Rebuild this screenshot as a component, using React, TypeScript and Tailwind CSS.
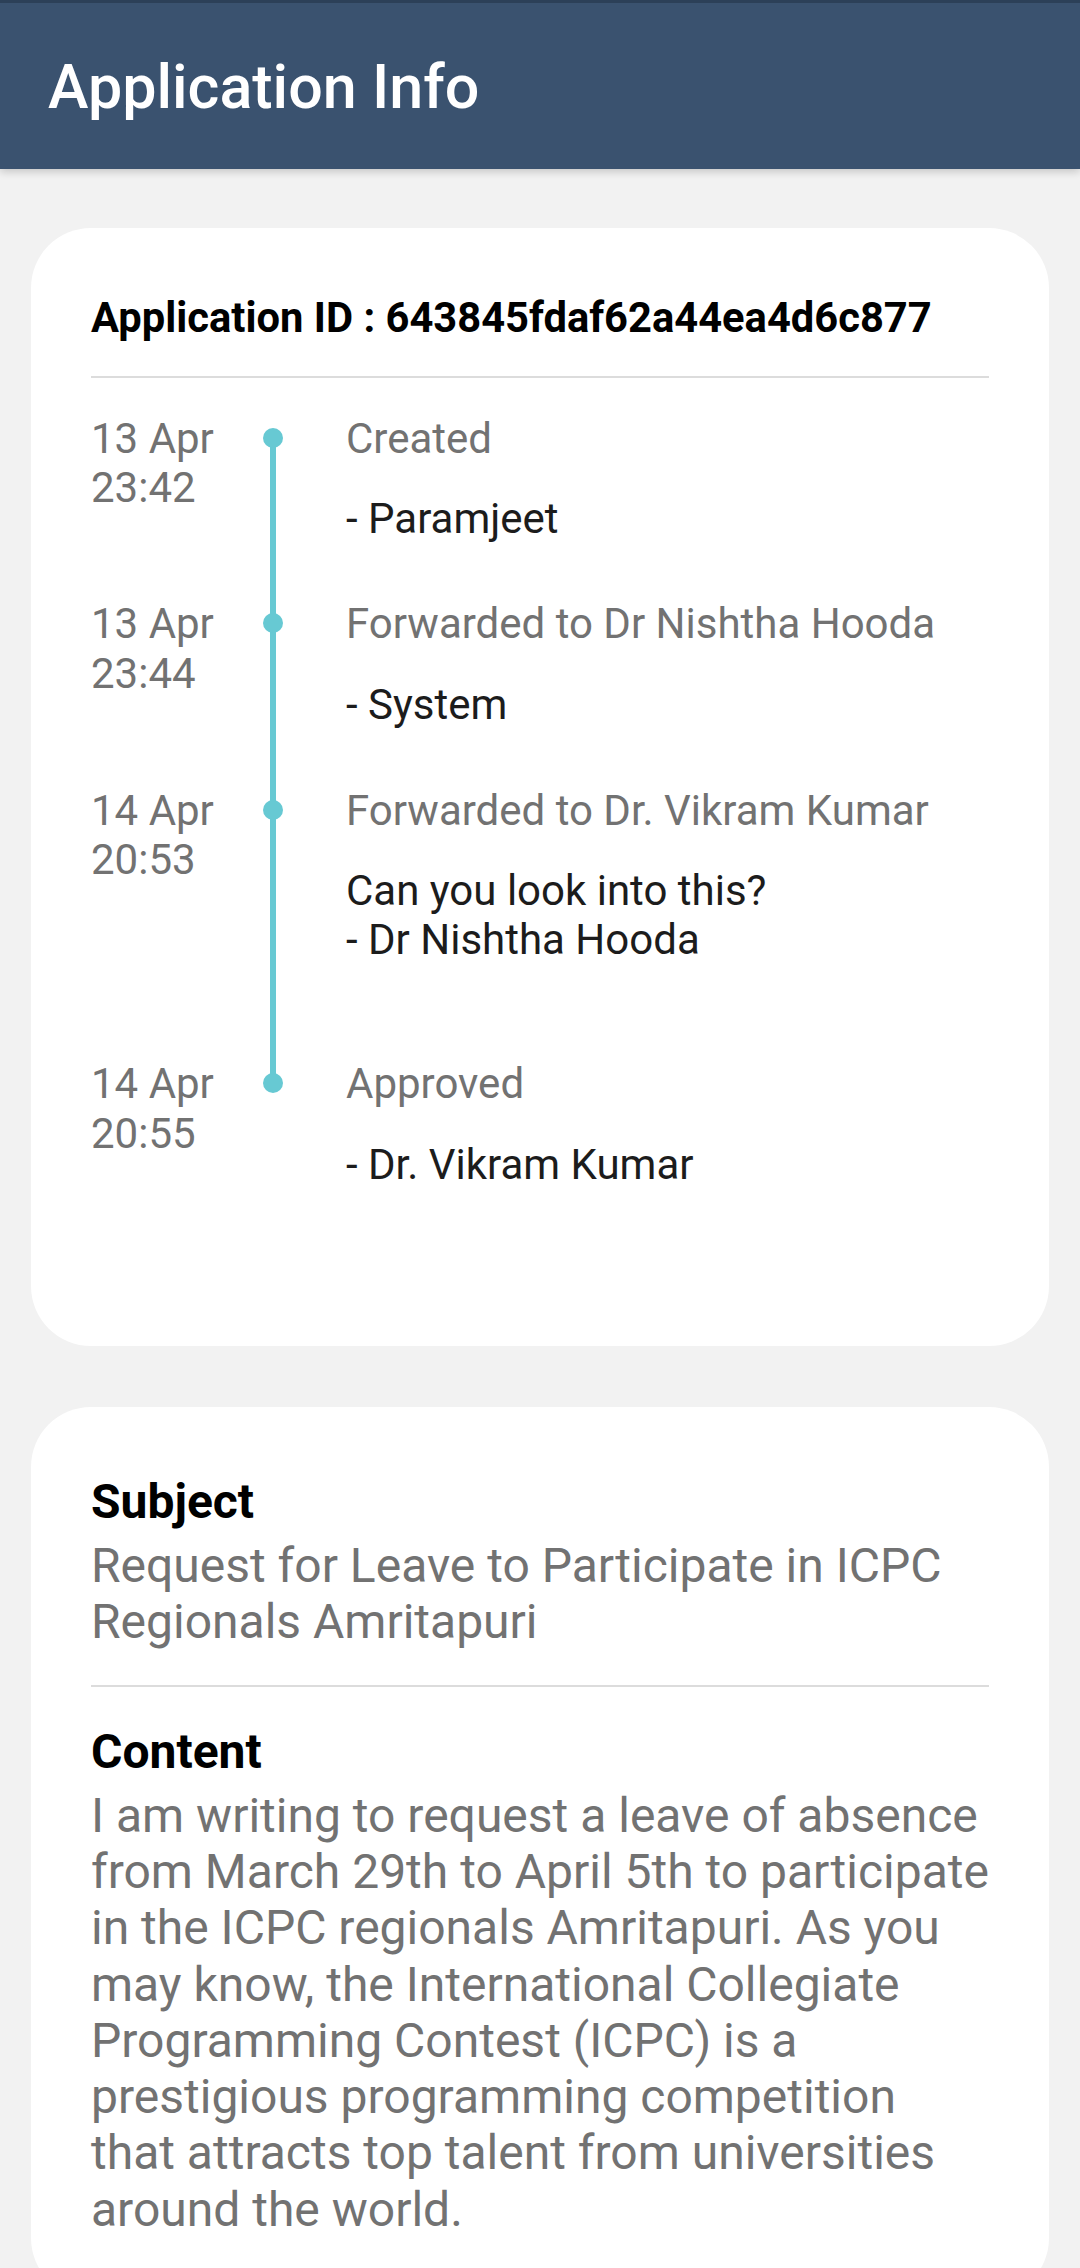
import React from "react";

type Entry = {
  date: string;
  time: string;
  title: string;
  lines: string[];
  pb: string;
  pos: "first" | "mid" | "last";
};

const entries: Entry[] = [
  { date: "13 Apr", time: "23:42", title: "Created", lines: ["- Paramjeet"], pb: "pb-[56px]", pos: "first" },
  { date: "13 Apr", time: "23:44", title: "Forwarded to Dr Nishtha Hooda", lines: ["- System"], pb: "pb-[57px]", pos: "mid" },
  {
    date: "14 Apr",
    time: "20:53",
    title: "Forwarded to Dr. Vikram Kumar",
    lines: ["Can you look into this?", "- Dr Nishtha Hooda"],
    pb: "pb-[95px]",
    pos: "mid",
  },
  { date: "14 Apr", time: "20:55", title: "Approved", lines: ["- Dr. Vikram Kumar"], pb: "pb-[97px]", pos: "last" },
];

function Row({ e }: { e: Entry }) {
  return (
    <div className="flex">
      <div className="w-[172px] shrink-0 text-[42px] leading-[1.172] text-[#727272]">
        <div>{e.date}</div>
        <div>{e.time}</div>
      </div>
      <div className="relative w-[20px] shrink-0">
        {e.pos === "first" && <div className="absolute left-[7px] top-[24px] bottom-0 w-[6px] bg-[#67c9d3]" />}
        {e.pos === "mid" && <div className="absolute left-[7px] top-0 bottom-0 w-[6px] bg-[#67c9d3]" />}
        {e.pos === "last" && <div className="absolute left-[7px] top-0 h-[24px] w-[6px] bg-[#67c9d3]" />}
        <div className="absolute left-0 top-[14px] h-[20px] w-[20px] rounded-full bg-[#67c9d3]" />
      </div>
      <div className={`ml-[63px] flex-1 ${e.pb}`}>
        <div className="text-[42px] leading-[1.172] text-[#727272] whitespace-nowrap">{e.title}</div>
        <div className="mt-[31px] text-[42px] leading-[1.172] text-[#1c1c1c]">
          {e.lines.map((l, i) => (
            <div key={i} className="whitespace-nowrap">
              {l}
            </div>
          ))}
        </div>
      </div>
    </div>
  );
}

const contentLines = [
  "I am writing to request a leave of absence",
  "from March 29th to April 5th to participate",
  "in the ICPC regionals Amritapuri. As you",
  "may know, the International Collegiate",
  "Programming Contest (ICPC) is a",
  "prestigious programming competition",
  "that attracts top talent from universities",
  "around the world.",
];

export default function App() {
  return (
    <div
      className="h-[2268px] w-[1080px] overflow-hidden bg-[#f2f2f2]"
      style={{ fontFamily: "Roboto, 'Noto Sans', sans-serif" }}
    >
      <header className="relative z-10 flex h-[169px] items-center border-t-[3px] border-[#2c4058] bg-[#3a526f] pl-[48px] pt-[3px] shadow-[0_3px_8px_rgba(0,0,0,0.18)]">
        <h1 className="text-[61px] font-medium leading-[1.172] text-white">Application Info</h1>
      </header>

      <main className="px-[31px] pt-[59px]">
        <section className="rounded-[60px] bg-white px-[60px] pt-[66px] pb-[60px]">
          <div className="text-[41.7px] font-bold leading-[1.172] text-black whitespace-nowrap">
            Application ID : 643845fdaf62a44ea4d6c877
          </div>
          <div className="mt-[33px] h-[2px] bg-[#dcdcdc]" />
          <div className="mt-[36px]">
            {entries.map((e, i) => (
              <Row key={i} e={e} />
            ))}
          </div>
        </section>

        <section className="mt-[61px] rounded-[60px] bg-white px-[60px] pt-[67px] pb-[60px]">
          <div className="text-[48px] font-bold leading-[1.172] text-black">Subject</div>
          <div className="mt-[8px] text-[48px] leading-[1.172] text-[#727272]">
            <div className="whitespace-nowrap">Request for Leave to Participate in ICPC</div>
            <div className="whitespace-nowrap">Regionals Amritapuri</div>
          </div>
          <div className="mt-[34px] h-[2px] bg-[#dcdcdc]" />
          <div className="mt-[37px] text-[48px] font-bold leading-[1.172] text-black">Content</div>
          <div className="mt-[8px] text-[48px] leading-[1.172] text-[#727272]">
            {contentLines.map((l, i) => (
              <div key={i} className="whitespace-nowrap">
                {l}
              </div>
            ))}
          </div>
        </section>
      </main>
    </div>
  );
}
